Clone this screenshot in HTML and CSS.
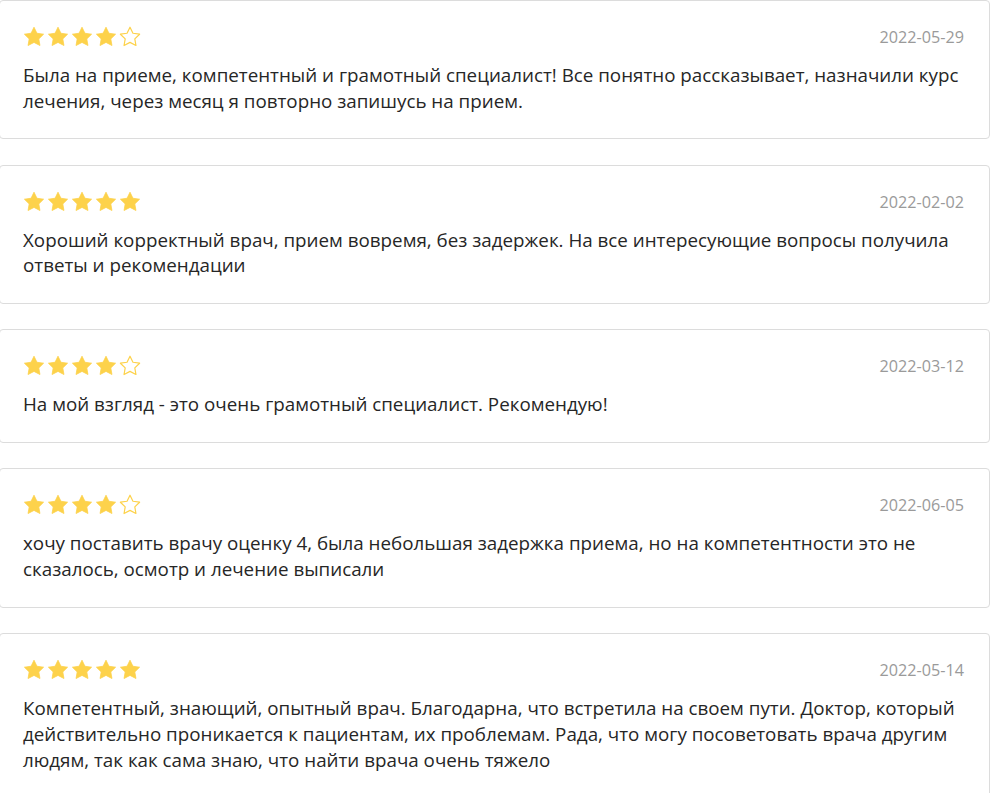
FILE: index.html
```html
<!DOCTYPE html>
<html lang="ru">
<head>
<meta charset="utf-8">
<title>Отзывы</title>
<link rel="stylesheet" href="styles.css">
</head>
<body>
<svg width="0" height="0" class="defs" aria-hidden="true">
  <defs>
    <path id="star" d="M12 2.2l2.95 6.05 6.65.95-4.8 4.7 1.15 6.6L12 17.4l-5.95 3.1 1.15-6.6-4.8-4.7 6.65-.95z"/>
  </defs>
</svg>
<div class="reviews">
  <div class="review">
    <div class="review-head">
      <div class="stars">
        <svg class="star" viewBox="0 0 24 24"><use href="#star"/></svg>
        <svg class="star" viewBox="0 0 24 24"><use href="#star"/></svg>
        <svg class="star" viewBox="0 0 24 24"><use href="#star"/></svg>
        <svg class="star" viewBox="0 0 24 24"><use href="#star"/></svg>
        <svg class="star empty" viewBox="0 0 24 24"><use href="#star"/></svg>
      </div>
      <div class="date">2022-05-29</div>
    </div>
    <p class="text">Была на приеме, компетентный и грамотный специалист! Все понятно рассказывает, назначили курс лечения, через месяц я повторно запишусь на прием.</p>
  </div>

  <div class="review">
    <div class="review-head">
      <div class="stars">
        <svg class="star" viewBox="0 0 24 24"><use href="#star"/></svg>
        <svg class="star" viewBox="0 0 24 24"><use href="#star"/></svg>
        <svg class="star" viewBox="0 0 24 24"><use href="#star"/></svg>
        <svg class="star" viewBox="0 0 24 24"><use href="#star"/></svg>
        <svg class="star" viewBox="0 0 24 24"><use href="#star"/></svg>
      </div>
      <div class="date">2022-02-02</div>
    </div>
    <p class="text">Хороший корректный врач, прием вовремя, без задержек. На все интересующие вопросы получила ответы и рекомендации</p>
  </div>

  <div class="review">
    <div class="review-head">
      <div class="stars">
        <svg class="star" viewBox="0 0 24 24"><use href="#star"/></svg>
        <svg class="star" viewBox="0 0 24 24"><use href="#star"/></svg>
        <svg class="star" viewBox="0 0 24 24"><use href="#star"/></svg>
        <svg class="star" viewBox="0 0 24 24"><use href="#star"/></svg>
        <svg class="star empty" viewBox="0 0 24 24"><use href="#star"/></svg>
      </div>
      <div class="date">2022-03-12</div>
    </div>
    <p class="text">На мой взгляд - это очень грамотный специалист. Рекомендую!</p>
  </div>

  <div class="review">
    <div class="review-head">
      <div class="stars">
        <svg class="star" viewBox="0 0 24 24"><use href="#star"/></svg>
        <svg class="star" viewBox="0 0 24 24"><use href="#star"/></svg>
        <svg class="star" viewBox="0 0 24 24"><use href="#star"/></svg>
        <svg class="star" viewBox="0 0 24 24"><use href="#star"/></svg>
        <svg class="star empty" viewBox="0 0 24 24"><use href="#star"/></svg>
      </div>
      <div class="date">2022-06-05</div>
    </div>
    <p class="text">хочу поставить врачу оценку 4, была небольшая задержка приема, но на компетентности это не сказалось, осмотр и лечение выписали</p>
  </div>

  <div class="review">
    <div class="review-head">
      <div class="stars">
        <svg class="star" viewBox="0 0 24 24"><use href="#star"/></svg>
        <svg class="star" viewBox="0 0 24 24"><use href="#star"/></svg>
        <svg class="star" viewBox="0 0 24 24"><use href="#star"/></svg>
        <svg class="star" viewBox="0 0 24 24"><use href="#star"/></svg>
        <svg class="star" viewBox="0 0 24 24"><use href="#star"/></svg>
      </div>
      <div class="date">2022-05-14</div>
    </div>
    <p class="text">Компетентный, знающий, опытный врач. Благодарна, что встретила на своем пути. Доктор, который действительно проникается к пациентам, их проблемам. Рада, что могу посоветовать врача другим людям, так как сама знаю, что найти врача очень тяжело</p>
  </div>
</div>
</body>
</html>
```

FILE: styles.css
```css
html, body {
  margin: 0;
  padding: 0;
  background: #fff;
}

body {
  font-family: "Open Sans", "Noto Sans", sans-serif;
  color: #262626;
}

.defs {
  position: absolute;
  width: 0;
  height: 0;
  overflow: hidden;
}

.reviews {
  width: 991px;
  margin-left: -1px;
  display: flex;
  flex-direction: column;
  gap: 25.3px;
}

.review {
  border: 1px solid #dcdcdc;
  border-radius: 4px;
  padding: 22px 25px 24px 23px;
}

.review-head {
  display: flex;
  align-items: center;
  justify-content: space-between;
  height: 28px;
}

.stars {
  display: flex;
  margin-left: -1px;
}

.star {
  width: 24px;
  height: 24px;
  fill: #fdd24b;
  stroke: #fdd24b;
  stroke-width: 0.8;
  stroke-linejoin: round;
}

.star.empty {
  fill: none;
  stroke-width: 1.2;
}

.date {
  font-size: 16.2px;
  color: #9a9a9a;
}

.text {
  margin: 12px 0 0;
  font-size: 18.8px;
  line-height: 25.7px;
}
```
